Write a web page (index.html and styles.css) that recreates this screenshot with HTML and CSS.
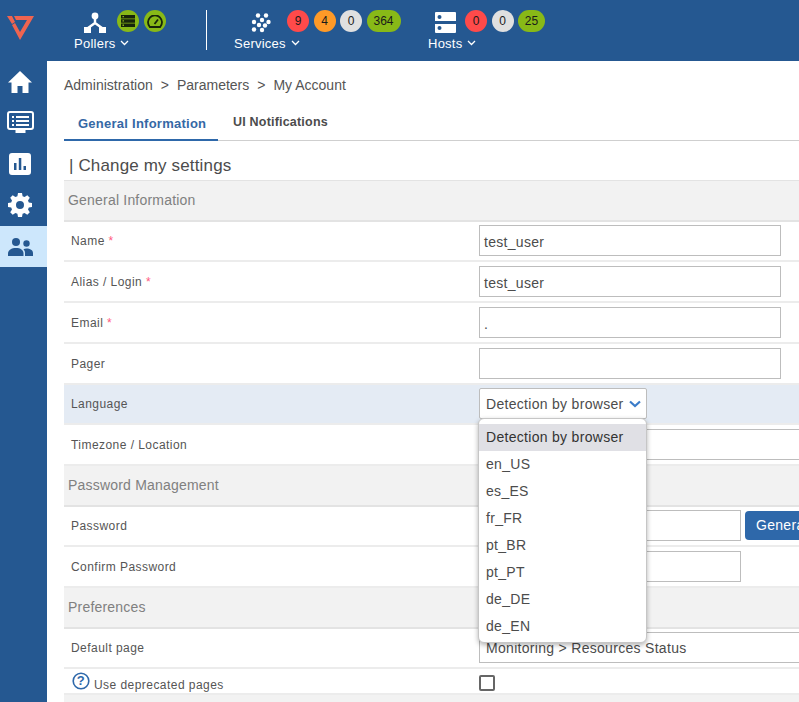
FILE: index.html
```html
<!DOCTYPE html>
<html lang="en">
<head>
<meta charset="utf-8">
<title>My Account</title>
<link rel="stylesheet" href="styles.css">
</head>
<body>
<header class="topbar">
  <div class="logo">
    <svg width="28" height="26" viewBox="0 0 28 26"><path fill="#ef6450" d="M0 2h5l3 6-3 2zM7 2h20L13 26 5 11l3-2 5 9 7-12H9z"/></svg>
  </div>
  <div class="group group-pollers">
    <div class="group-top">
      <svg class="gicon" width="22" height="21" viewBox="0 0 22 21"><circle cx="11" cy="4" r="3.4" fill="#fff"/><path fill="none" stroke="#fff" stroke-width="2.4" d="M11 6v6M11 11l-7 5M11 11l7 5"/><path fill="#fff" d="M0 15h7v6H0zM15 15h7v6h-7z"/></svg>
      <span class="badge green"><svg width="14" height="12" viewBox="0 0 14 12"><path fill="#16240a" d="M0 0h14v3.4H0zM0 4.3h14v3.4H0zM0 8.6h14V12H0z"/><path fill="#8ab21e" d="M1.500 1h1.500v1.300H1.500zM1.500 5.300h1.500v1.300H1.500zM1.500 9.600h1.500v1.300H1.500z"/></svg></span>
      <span class="badge green"><svg width="16" height="13" viewBox="0 0 16 13"><path fill="none" stroke="#16240a" stroke-width="1.800" d="M2.800 12A7 7 0 1 1 13.200 12z"/><path stroke="#16240a" stroke-width="1.800" d="M7.500 9l3.500-4.500"/></svg></span>
    </div>
    <div class="group-label">Pollers <svg class="chev" width="9" height="6" viewBox="0 0 9 6"><path fill="none" stroke="#fff" stroke-width="1.300" d="M1 1l3.500 3.500L8 1"/></svg></div>
  </div>
  <div class="divider"></div>
  <div class="group group-services">
    <div class="group-top">
      <svg class="gicon" width="20" height="20" viewBox="0 0 20 20" fill="#fff"><circle cx="7" cy="2.500" r="2.200"/><circle cx="15" cy="2.500" r="2.200"/><circle cx="3" cy="9" r="2.200"/><circle cx="11" cy="7" r="2.200"/><circle cx="17.500" cy="9" r="2.200"/><circle cx="8" cy="12" r="2.200"/><circle cx="14" cy="12.500" r="2.200"/><circle cx="3" cy="16.500" r="2.200"/><circle cx="11" cy="17" r="2.200"/></svg>
      <span class="badge red">9</span>
      <span class="badge orange">4</span>
      <span class="badge grey">0</span>
      <span class="badge green wide">364</span>
    </div>
    <div class="group-label">Services <svg class="chev" width="9" height="6" viewBox="0 0 9 6"><path fill="none" stroke="#fff" stroke-width="1.300" d="M1 1l3.500 3.500L8 1"/></svg></div>
  </div>
  <div class="group group-hosts">
    <div class="group-top">
      <svg class="gicon" width="21" height="21" viewBox="0 0 21 21"><path fill="#fff" d="M0 1a1 1 0 0 1 1-1h19a1 1 0 0 1 1 1v8H0zM0 12h21v8a1 1 0 0 1-1 1H1a1 1 0 0 1-1-1z"/><circle cx="4.500" cy="5" r="2" fill="#255891"/><circle cx="4.500" cy="16" r="2" fill="#255891"/></svg>
      <span class="badge red">0</span>
      <span class="badge grey">0</span>
      <span class="badge green mid">25</span>
    </div>
    <div class="group-label">Hosts <svg class="chev" width="9" height="6" viewBox="0 0 9 6"><path fill="none" stroke="#fff" stroke-width="1.300" d="M1 1l3.500 3.500L8 1"/></svg></div>
  </div>
</header>
<div class="shell">
  <nav class="sidebar">
    <a class="nav-item"><svg width="24" height="22" viewBox="0 0 24 22"><path fill="#fff" d="M12 0L0 11.500h3.500V22h6v-7h5v7h6V11.500H24z"/></svg></a>
    <a class="nav-item"><svg width="27" height="23" viewBox="0 0 27 23"><rect x="1" y="1" width="25" height="17" rx="2" fill="none" stroke="#fff" stroke-width="2"/><path fill="#fff" d="M5 5h2v2H5zM9 5h13v2H9zM5 9h2v2H5zM9 9h13v2H9zM5 13h2v2H5zM9 13h13v2H9zM8.500 19h10v3h-10z"/></svg></a>
    <a class="nav-item"><svg width="22" height="22" viewBox="0 0 22 22"><path fill="#fff" fill-rule="evenodd" d="M3 0h16a3 3 0 0 1 3 3v16a3 3 0 0 1-3 3H3a3 3 0 0 1-3-3V3a3 3 0 0 1 3-3zM5 10v7h2.500v-7zM9.800 5v12h2.500V5zM14.500 13v4H17v-4z"/></svg></a>
    <a class="nav-item"><svg width="24" height="24" viewBox="0 0 24 24"><path fill="#fff" fill-rule="evenodd" d="M10 0h4l.6 3.200 2 .8L19.300 2.200l2.500 2.500L20 7.400l.8 2 3.200.6v4l-3.200.6-.8 2 1.800 2.700-2.500 2.500-2.700-1.800-2 .8L14 24h-4l-.6-3.200-2-.8-2.700 1.800-2.500-2.500L4 16.600l-.8-2L0 14v-4l3.200-.6.8-2-1.800-2.700 2.500-2.500L7.400 4l2-.8zM12 8a4 4 0 1 0 0 8 4 4 0 0 0 0-8z"/></svg></a>
    <a class="nav-item active"><svg width="25" height="18" viewBox="0 0 25 18"><g fill="#255891"><circle cx="8" cy="4" r="4"/><path d="M0 18v-2.500C0 12 3.500 10 8 10s7.500 2 7.500 5.500V18z"/><circle cx="18.500" cy="5.500" r="3.200"/><path d="M17 18v-3c0-1.500-.6-2.800-1.600-3.700 1-.5 2-.8 3.100-.8 3.500 0 6.500 1.700 6.500 4.500v3z"/></g></svg></a>
  </nav>
  <main class="content">
    <div class="breadcrumb"><span>Administration</span><span>&gt;</span><span>Parameters</span><span>&gt;</span><span>My Account</span></div>
    <div class="tabs">
      <span class="tab tab-active">General Information</span>
      <span class="tab">UI Notifications</span>
    </div>
    <h1 class="page-title">| Change my settings</h1>
    <div class="form">
      <div class="section">General Information</div>
      <div class="row"><div class="label">Name <i class="req">*</i></div><div class="field"><span class="input short">test_user</span></div></div>
      <div class="row"><div class="label">Alias / Login <i class="req">*</i></div><div class="field"><span class="input short">test_user</span></div></div>
      <div class="row"><div class="label">Email <i class="req">*</i></div><div class="field"><span class="input short">.</span></div></div>
      <div class="row"><div class="label">Pager</div><div class="field"><span class="input short"></span></div></div>
      <div class="row row-hl"><div class="label">Language</div>
        <div class="field">
          <span class="input select">Detection by browser <svg width="12" height="8" viewBox="0 0 12 8"><path fill="none" stroke="#3b7cc9" stroke-width="2.200" d="M1 1.500l5 4.500 5-4.500"/></svg></span>
          <ul class="menu">
            <li class="sel">Detection by browser</li><li>en_US</li><li>es_ES</li><li>fr_FR</li><li>pt_BR</li><li>pt_PT</li><li>de_DE</li><li>de_EN</li>
          </ul>
        </div>
      </div>
      <div class="row"><div class="label">Timezone / Location</div><div class="field"><span class="input long"></span></div></div>
      <div class="section">Password Management</div>
      <div class="row"><div class="label">Password</div><div class="field"><span class="input pw"></span><span class="btn">Generate</span></div></div>
      <div class="row"><div class="label">Confirm Password</div><div class="field"><span class="input pw"></span></div></div>
      <div class="section">Preferences</div>
      <div class="row"><div class="label">Default page</div><div class="field"><span class="input long">Monitoring &gt; Resources Status</span></div></div>
      <div class="row row-small"><div class="label label-help"><svg class="help" width="18" height="18" viewBox="0 0 18 18"><circle cx="9" cy="9" r="7.800" fill="none" stroke="#2e68aa" stroke-width="1.600"/><text x="9" y="13.200" text-anchor="middle" class="help-q">?</text></svg><span class="help-text">Use deprecated pages</span></div><div class="field"><span class="check"></span></div></div>
      <div class="section"></div>
    </div>
  </main>
</div>
</body>
</html>
```
FILE: styles.css
```css
* { box-sizing: border-box; }
html, body { margin: 0; height: 100%; overflow: hidden; }
body { font-family: "Liberation Sans", Arial, sans-serif; color: #4c4c4c; background: #fff; }

.topbar { height: 61px; background: #255891; display: flex; color: #fff; }
.logo { width: 47px; padding: 14px 0 0 7px; flex: none; }
.group { flex: none; padding-top: 10px; }
.group-top { display: flex; height: 22px; align-items: center; gap: 4.500px; }
.group-label { font-size: 13px; line-height: 16px; margin-top: 4px; letter-spacing: .25px; white-space: nowrap; }
.chev { vertical-align: 2px; margin-left: 1px; }
.group-pollers { width: 132px; margin-left: 27px; }
.group-pollers .gicon { margin: 3px 0 0 10px; }
.group-pollers .group-top { gap: 5px; }
.group-pollers .gicon + .badge { margin-left: 6px; }
.divider { width: 1px; height: 40px; background: #fff; margin: 10px 27px 0 0; flex: none; }
.group-services { width: 194px; }
.group-services .gicon { margin: 3px 6px 0 17px; }
.group-services .gicon + .badge { margin-left: 5.500px; }
.group-hosts { flex: none; }
.group-hosts .gicon { margin: 2px 1px 0 7px; }
.group-hosts .gicon + .badge { margin-left: 3.500px; }
.badge { height: 22px; min-width: 22px; border-radius: 11px; display: inline-flex; align-items: center; justify-content: center; font-size: 12px; color: #1a1a1a; flex: none; }
.badge.wide { width: 34px; }
.badge.mid { width: 27px; }
.red { background: #ff4a4a; }
.orange { background: #ff9a27; }
.grey { background: #e0e0e0; }
.green { background: #88b917; }

.shell { display: flex; height: 641px; }
.sidebar { width: 47px; background: #255891; flex: none; }
.nav-item { display: flex; align-items: center; justify-content: center; height: 41px; padding-right: 7px; }
.nav-item.active { background: #cde7fc; margin-top: 1px; }
.content { flex: 1; min-width: 0; padding: 0 0 0 17px; overflow: hidden; }
.breadcrumb { display: flex; gap: 8px; font-size: 14px; line-height: 16px; padding-top: 16px; color: #555; }
.tabs { display: flex; margin-top: 14px; height: 34px; border-bottom: 1px solid #cfcfcf; }
.tab { font-size: 12.500px; font-weight: bold; line-height: 16px; color: #4c4c4c; padding: 7px 0 0 14px; letter-spacing: .2px; }
.tab-active { font-size: 13px; color: #3568a5; padding: 9px 14px 0; width: 154px; height: 34px; border-bottom: 2px solid #2e68aa; letter-spacing: .25px; white-space: nowrap; }
.tab + .tab { padding-left: 15px; }
.page-title { font-size: 17px; font-weight: normal; line-height: 20px; margin: 15px 0 4px 5px; color: #4c4c4c; letter-spacing: .15px; }
.form { width: 900px; border-top: 1px solid #e3e3e3; }
.section { height: 40.500px; background: #f2f2f2; border-bottom: 2px solid #e3e3e3; font-size: 14px; line-height: 38px; padding-left: 4px; color: #808080; letter-spacing: .2px; }
.row { display: flex; height: 40.750px; border-bottom: 2px solid #ececec; align-items: center; }
.row-hl { background: #e4ebf4; }
.row-small { height: 26px; }
.label { width: 415px; padding: 1px 0 0 7px; font-size: 12px; flex: none; color: #555; letter-spacing: .45px; white-space: nowrap; }
.req { font-style: normal; color: #ff5b7f; }
.field { position: relative; display: flex; align-items: center; gap: 4px; }
.input { display: block; height: 31px; border: 1px solid #bdbdbd; background: #fff; font-size: 14px; line-height: 31px; padding: 1px 0 0 4px; color: #4c4c4c; white-space: nowrap; letter-spacing: .3px; }
.short { width: 302px; }
.long { width: 400px; padding: 0 0 0 6px; }
.pw { width: 262px; }
.select { width: 168px; border-radius: 2px; padding-left: 6px; display: flex; align-items: center; gap: 5px; }
.btn { background: #2e68aa; color: #fff; font-size: 14px; height: 29px; line-height: 29px; padding: 0 11px; border-radius: 4px; letter-spacing: .3px; }
.menu { position: absolute; left: -1px; top: 30px; z-index: 5; width: 169px; margin: 0; padding: 5px 0 0; list-style: none; background: #fff; border-radius: 6px; border: 1px solid #c6c6c6; box-shadow: 0 2px 5px rgba(0,0,0,.3); height: 225px; overflow: hidden; }
.menu li { height: 27px; line-height: 27px; font-size: 14px; padding-left: 7px; color: #4c4c4c; letter-spacing: .3px; }
.menu .sel { background: #e0e0e5; color: #333; }
.label-help { display: flex; align-items: center; padding-left: 8px; }
.help { margin: 0 4px 2px 0; }
.help-q { font-size: 13px; font-weight: bold; fill: #2e68aa; font-family: "Liberation Sans", Arial, sans-serif; }
.help-text { margin-top: 6px; letter-spacing: .45px; }
.check { display: block; width: 16px; height: 16px; border: 2px solid #666; border-radius: 2px; background: #fff; margin-top: 4px; }
```
